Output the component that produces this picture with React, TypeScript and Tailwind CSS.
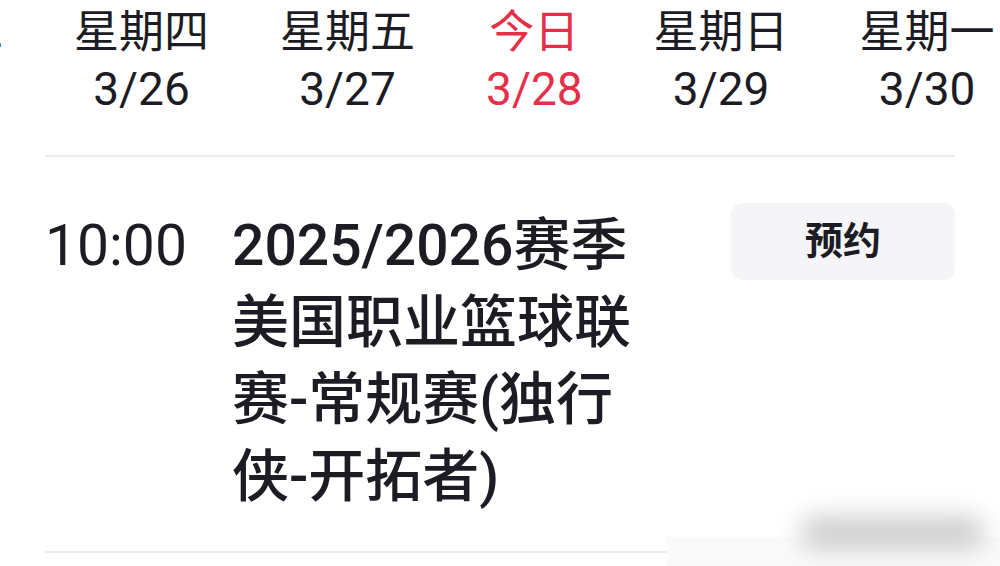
const days = [
  { week: "星期二", date: "3/25" },
  { week: "星期四", date: "3/26" },
  { week: "星期五", date: "3/27" },
  { week: "今日", date: "3/28", today: true },
  { week: "星期日", date: "3/29" },
  { week: "星期一", date: "3/30" },
];

export default function App() {
  return (
    <div
      className="relative h-[566px] w-[1000px] overflow-hidden bg-white text-[#1c1c24]"
      style={{ fontFamily: "Roboto, 'Noto Sans CJK SC', sans-serif" }}
    >
      <div className="ml-[-132px] flex gap-[71px] whitespace-nowrap pt-[5px] text-center text-[45px] leading-[56px]">
        {days.map((d) => (
          <div key={d.date} className={d.today ? "text-[#e5304a]" : ""}>
            <div>{d.week}</div>
            <div className="text-[46px]">{d.date}</div>
          </div>
        ))}
      </div>

      <div className="px-[45px]">
        <div className="mt-[38px] border-t-2 border-[#ececec]" />
        <div className="flex items-start pt-[50px] pb-[36px]">
          <div className="w-[187px] text-[57px] leading-[77px]">10:00</div>
          <div className="w-[430px] text-[57px] font-medium leading-[77px]">
            2025/2026赛季美国职业篮球联赛-常规赛(独行侠-开拓者)
          </div>
          <button className="ml-auto mt-[-4px] flex h-[77px] w-[224px] items-center justify-center rounded-[12px] bg-[#f5f5f7] text-[38px] font-bold">
            预约
          </button>
        </div>
        <div className="w-[622px] border-t-2 border-[#ececec]" />
      </div>

      <div className="absolute left-[667px] top-[537px] h-[40px] w-[340px] bg-[#fafafa]" />
      <div className="absolute left-[800px] top-[516px] h-[34px] w-[185px] rounded-full bg-[#cfcfcf] blur-md" />
    </div>
  );
}
